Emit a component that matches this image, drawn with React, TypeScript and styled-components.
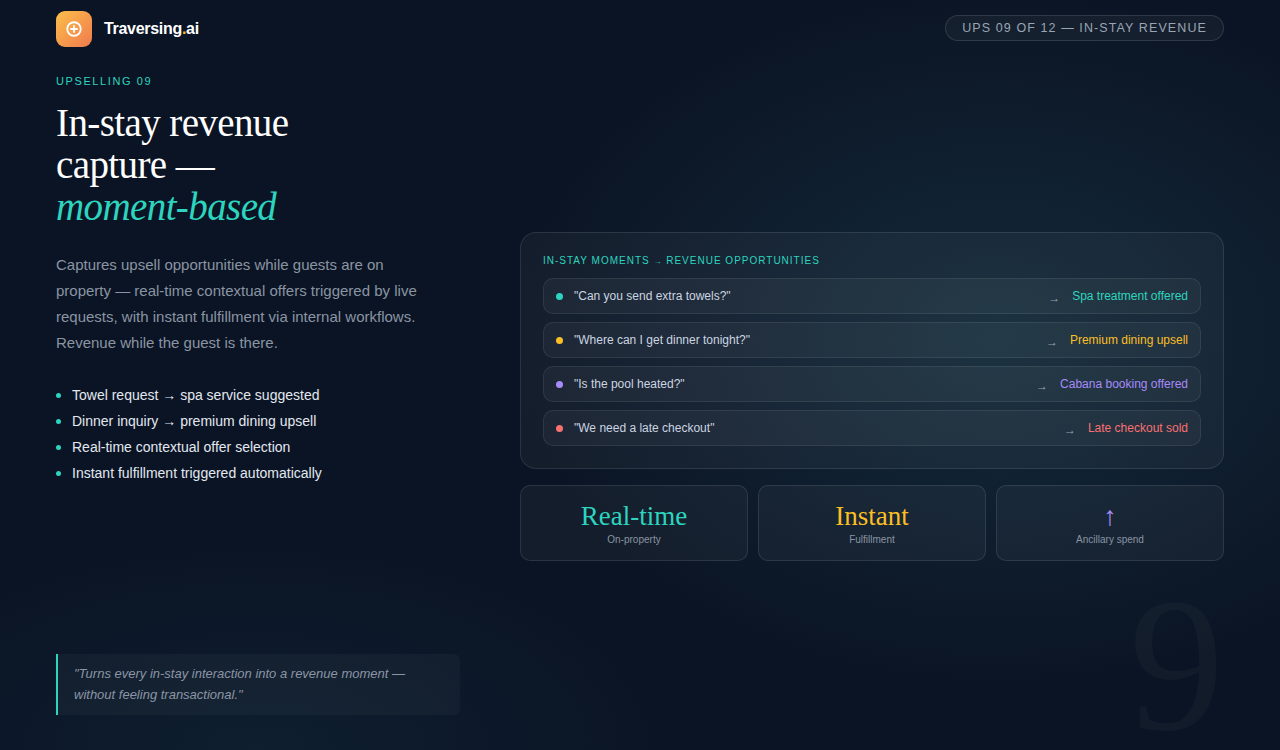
import styled, { createGlobalStyle } from "styled-components";

const GlobalStyle = createGlobalStyle`
  html, body { margin: 0; padding: 0; }
  body {
    font-family: "Liberation Sans", Arial, sans-serif;
    background: #0b1424;
  }
`;

const moments = [
  { q: '"Can you send extra towels?"', offer: "Spa treatment offered", color: "#2dd4bf" },
  { q: '"Where can I get dinner tonight?"', offer: "Premium dining upsell", color: "#fbbf24" },
  { q: '"Is the pool heated?"', offer: "Cabana booking offered", color: "#a78bfa" },
  { q: '"We need a late checkout"', offer: "Late checkout sold", color: "#f87171" },
];

const stats = [
  { value: "Real-time", label: "On-property", color: "#2dd4bf" },
  { value: "Instant", label: "Fulfillment", color: "#fbbf24" },
  { value: "↑", label: "Ancillary spend", color: "#a78bfa" },
];

const bullets = [
  "Towel request → spa service suggested",
  "Dinner inquiry → premium dining upsell",
  "Real-time contextual offer selection",
  "Instant fulfillment triggered automatically",
];

export default function App() {
  return (
    <Page>
      <GlobalStyle />
      <BigNine>9</BigNine>
      <Header>
        <Brand>
          <Logo>
            <svg width="18" height="18" viewBox="0 0 24 24" fill="none" stroke="#fff" strokeWidth="2.4" strokeLinecap="round">
              <circle cx="12" cy="12" r="9" />
              <path d="M12 8v8M8 12h8" />
            </svg>
          </Logo>
          <BrandName>
            Traversing<Dot>.</Dot>ai
          </BrandName>
        </Brand>
        <Pill>UPS 09 OF 12 — IN-STAY REVENUE</Pill>
      </Header>
      <Main>
        <Left>
          <Eyebrow>UPSELLING 09</Eyebrow>
          <Title>
            In-stay revenue
            <br />
            capture —
            <br />
            <em>moment-based</em>
          </Title>
          <Lead>
            Captures upsell opportunities while guests are on property — real-time contextual offers
            triggered by live requests, with instant fulfillment via internal workflows. Revenue while
            the guest is there.
          </Lead>
          <List>
            {bullets.map((b) => (
              <li key={b}>{b}</li>
            ))}
          </List>
          <Quote>
            "Turns every in-stay interaction into a revenue moment — without feeling transactional."
          </Quote>
        </Left>
        <Right>
          <Panel>
            <PanelLabel>
              IN-STAY MOMENTS <small>→</small> REVENUE OPPORTUNITIES
            </PanelLabel>
            <Rows>
              {moments.map((m) => (
                <Row key={m.q}>
                  <Bullet $color={m.color} />
                  <Question>{m.q}</Question>
                  <Arrow>→</Arrow>
                  <Offer $color={m.color}>{m.offer}</Offer>
                </Row>
              ))}
            </Rows>
          </Panel>
          <Stats>
            {stats.map((s) => (
              <Stat key={s.label}>
                <StatValue $color={s.color}>{s.value}</StatValue>
                <StatLabel>{s.label}</StatLabel>
              </Stat>
            ))}
          </Stats>
        </Right>
      </Main>
    </Page>
  );
}

const Page = styled.div`
  position: relative;
  height: 750px;
  overflow: hidden;
  box-sizing: border-box;
  padding: 11px 56px 35px;
  display: flex;
  flex-direction: column;
  background:
    radial-gradient(ellipse 700px 500px at 78% 45%, rgba(30, 70, 85, 0.45), transparent 70%),
    radial-gradient(ellipse 600px 300px at 20% 100%, rgba(20, 50, 70, 0.35), transparent 70%),
    #0b1424;
  color: #e2e8f0;
`;

const BigNine = styled.div`
  position: absolute;
  right: 56px;
  bottom: -10px;
  font-family: "Liberation Serif", serif;
  font-size: 190px;
  line-height: 1;
  color: rgba(255, 255, 255, 0.03);
  pointer-events: none;
`;

const Header = styled.header`
  display: flex;
  justify-content: space-between;
  align-items: center;
  height: 36px;
`;

const Brand = styled.div`
  display: flex;
  align-items: center;
  gap: 12px;
`;

const Logo = styled.div`
  width: 36px;
  height: 36px;
  border-radius: 9px;
  background: linear-gradient(135deg, #fbbf4a, #f07a4e);
  display: flex;
  align-items: center;
  justify-content: center;
`;

const BrandName = styled.span`
  font-weight: 700;
  font-size: 16px;
  letter-spacing: -0.3px;
  color: #fff;
`;

const Dot = styled.span`
  color: #fbbf24;
`;

const Pill = styled.div`
  border: 1px solid rgba(255, 255, 255, 0.12);
  background: rgba(255, 255, 255, 0.04);
  border-radius: 999px;
  padding: 5px 16px;
  font-size: 12.5px;
  letter-spacing: 1.1px;
  color: #9aa5b4;
  margin-top: -2px;
`;

const Main = styled.main`
  flex: 1;
  display: grid;
  grid-template-columns: 404px 704px;
  justify-content: space-between;
`;

const Left = styled.section`
  display: flex;
  flex-direction: column;
  padding-top: 28px;
`;

const Eyebrow = styled.div`
  font-size: 11px;
  letter-spacing: 1.6px;
  color: #2dd4bf;
`;

const Title = styled.h1`
  margin: 15px 0 0;
  font-family: "Liberation Serif", serif;
  font-weight: 400;
  font-size: 39px;
  line-height: 42px;
  letter-spacing: -0.6px;
  color: #fff;
  em {
    color: #2dd4bf;
  }
`;

const Lead = styled.p`
  margin: 24px 0 0;
  width: 370px;
  font-size: 15px;
  line-height: 26px;
  color: #8a94a3;
`;

const List = styled.ul`
  list-style: none;
  margin: 26px 0 0;
  padding: 0;
  li {
    position: relative;
    padding-left: 16px;
    font-size: 14px;
    line-height: 26px;
    color: #e2e8f0;
  }
  li::before {
    content: "";
    position: absolute;
    left: 0;
    top: 11px;
    width: 5px;
    height: 5px;
    border-radius: 50%;
    background: #2dd4bf;
  }
`;

const Quote = styled.blockquote`
  margin: auto 0 0;
  width: 404px;
  box-sizing: border-box;
  border-left: 2px solid #2dd4bf;
  border-radius: 0 6px 6px 0;
  background: rgba(255, 255, 255, 0.03);
  padding: 9px 40px 10px 16px;
  font-style: italic;
  font-size: 13px;
  line-height: 21px;
  color: #8b95a5;
`;

const Right = styled.section`
  display: flex;
  flex-direction: column;
  gap: 14px;
  padding-top: 185px;
`;

const Panel = styled.div`
  border: 1px solid rgba(255, 255, 255, 0.1);
  background: rgba(255, 255, 255, 0.04);
  border-radius: 16px;
  padding: 22px 22px 22px;
`;

const PanelLabel = styled.div`
  font-size: 10px;
  letter-spacing: 1px;
  color: #2dd4bf;
  small {
    font-size: 8px;
  }
`;

const Rows = styled.div`
  margin-top: 12px;
  display: flex;
  flex-direction: column;
  gap: 8px;
`;

const Row = styled.div`
  display: flex;
  align-items: center;
  height: 34px;
  padding: 0 12px;
  border: 1px solid rgba(255, 255, 255, 0.08);
  background: rgba(255, 255, 255, 0.04);
  border-radius: 10px;
  font-size: 12px;
`;

const Bullet = styled.span<{ $color: string }>`
  width: 7px;
  height: 7px;
  border-radius: 50%;
  background: ${(p) => p.$color};
  margin-right: 11px;
`;

const Question = styled.span`
  flex: 1;
  color: #cbd5e1;
`;

const Arrow = styled.span`
  color: #9aa3b0;
  font-size: 12px;
  margin-right: 12px;
  position: relative;
  top: 2px;
`;

const Offer = styled.span<{ $color: string }>`
  color: ${(p) => p.$color};
`;

const Stats = styled.div`
  display: grid;
  grid-template-columns: repeat(3, 1fr);
  gap: 10px;
  margin-top: 2px;
`;

const Stat = styled.div`
  height: 74px;
  border: 1px solid rgba(255, 255, 255, 0.1);
  background: rgba(255, 255, 255, 0.04);
  border-radius: 10px;
  display: flex;
  flex-direction: column;
  align-items: center;
  justify-content: center;
  gap: 3px;
`;

const StatValue = styled.div<{ $color: string }>`
  font-family: "Liberation Serif", serif;
  font-size: 27px;
  line-height: 30px;
  color: ${(p) => p.$color};
`;

const StatLabel = styled.div`
  font-size: 10px;
  color: #8a94a3;
`;
